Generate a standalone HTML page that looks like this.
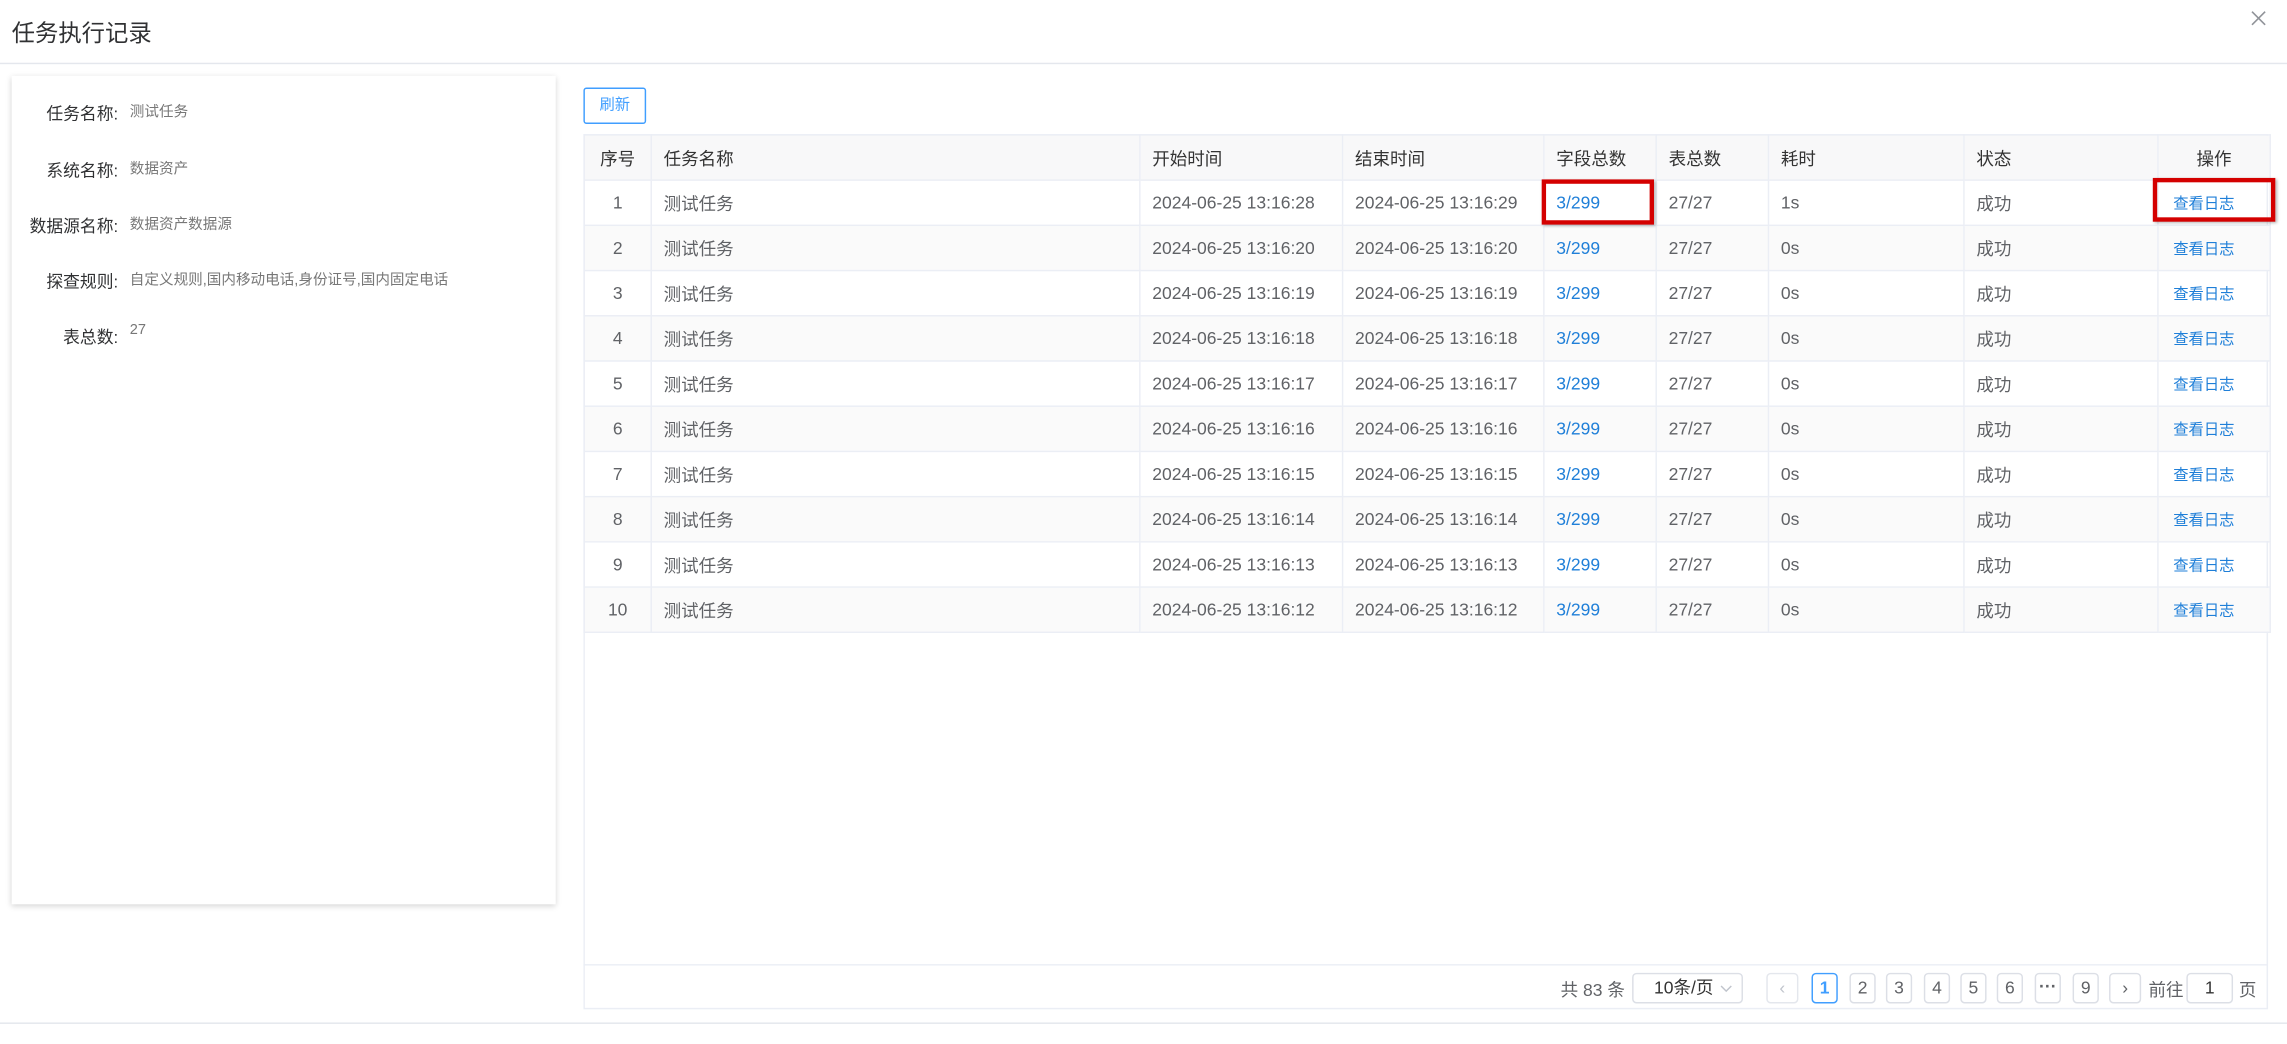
<!DOCTYPE html>
<html><head><meta charset="utf-8"><style>
html,body{margin:0;padding:0;background:#fff;overflow:hidden;width:2287px;height:1044px}
#w{position:absolute;left:0;top:0;width:1568px;height:716px;transform:scale(1.45855);transform-origin:0 0;font-family:"Liberation Sans","Noto Sans CJK SC",sans-serif;color:#606266}
.a{position:absolute;white-space:nowrap}
.title{left:8px;top:9px;font-size:16px;color:#303133}
.hl{position:absolute;left:0;width:1568px;height:1px;background:#e4e7ed}
.card{position:absolute;left:8px;top:52px;width:373px;height:568px;background:#fff;box-shadow:0 1px 4px rgba(0,0,0,.18)}
.lb{font-size:11.5px;color:#303133;text-align:right;width:75px;left:6px}
.vl{font-size:10px;color:#777;left:89px}
.btn{position:absolute;left:400px;top:60px;width:41px;height:23px;border:1px solid #409eff;border-radius:2px;color:#409eff;font-size:10.5px;text-align:center;line-height:23px}
.tb{position:absolute;left:400px;top:92px;width:1155px;height:600px;border:1px solid #ebeef5;box-sizing:border-box}
table{border-collapse:collapse;position:absolute;left:400px;top:92px;table-layout:fixed;font-size:12px}
td,th{height:30px;border:1px solid #ebeef5;padding:0 0 0 8px;text-align:left;font-weight:normal;white-space:nowrap;overflow:hidden}
th{background:#f8f8f9;color:#333}
tr.e td{background:#fafafa}
.c{text-align:center;padding:0}
.lk{color:#1f7fd8}
.op{color:#1f7fd8;font-size:10.5px;padding-left:10px}
.rb{position:absolute;border:3px solid #d40000;box-sizing:border-box;box-shadow:1px 1px 2px rgba(0,0,0,.3)}
.pg{position:absolute;top:667px;height:21px;border:1px solid #dcdfe6;border-radius:3px;box-sizing:border-box;font-size:12px;text-align:center;line-height:19px;color:#606266;background:#fff}
</style></head><body><div id="w">
<div class="a title">任务执行记录</div>
<svg class="a" style="left:1543px;top:7px" width="11" height="11" viewBox="0 0 11 11"><path d="M1 1L10 10M10 1L1 10" stroke="#909399" stroke-width="1.1"/></svg>
<div class="hl" style="top:43px"></div>
<div class="card"></div>
<div class="a lb" style="top:70px">任务名称:</div><div class="a vl" style="top:68px">测试任务</div>
<div class="a lb" style="top:109px">系统名称:</div><div class="a vl" style="top:107px">数据资产</div>
<div class="a lb" style="top:147px;left:0;width:81px">数据源名称:</div><div class="a vl" style="top:145px">数据资产数据源</div>
<div class="a lb" style="top:185px">探查规则:</div><div class="a vl" style="top:183px">自定义规则,国内移动电话,身份证号,国内固定电话</div>
<div class="a lb" style="top:223px">表总数:</div><div class="a vl" style="top:221px">27</div>
<div class="btn">刷新</div>
<div class="tb"></div>
<table>
<colgroup><col style="width:46px"><col style="width:335px"><col style="width:139px"><col style="width:138px"><col style="width:77px"><col style="width:77px"><col style="width:134px"><col style="width:133px"><col style="width:77px"></colgroup>
<tr><th class="c">序号</th><th>任务名称</th><th>开始时间</th><th>结束时间</th><th>字段总数</th><th>表总数</th><th>耗时</th><th>状态</th><th class="c">操作</th></tr>
<tr><td class="c">1</td><td>测试任务</td><td>2024-06-25 13:16:28</td><td>2024-06-25 13:16:29</td><td class="lk">3/299</td><td>27/27</td><td>1s</td><td>成功</td><td class="op">查看日志</td></tr>
<tr class="e"><td class="c">2</td><td>测试任务</td><td>2024-06-25 13:16:20</td><td>2024-06-25 13:16:20</td><td class="lk">3/299</td><td>27/27</td><td>0s</td><td>成功</td><td class="op">查看日志</td></tr>
<tr><td class="c">3</td><td>测试任务</td><td>2024-06-25 13:16:19</td><td>2024-06-25 13:16:19</td><td class="lk">3/299</td><td>27/27</td><td>0s</td><td>成功</td><td class="op">查看日志</td></tr>
<tr class="e"><td class="c">4</td><td>测试任务</td><td>2024-06-25 13:16:18</td><td>2024-06-25 13:16:18</td><td class="lk">3/299</td><td>27/27</td><td>0s</td><td>成功</td><td class="op">查看日志</td></tr>
<tr><td class="c">5</td><td>测试任务</td><td>2024-06-25 13:16:17</td><td>2024-06-25 13:16:17</td><td class="lk">3/299</td><td>27/27</td><td>0s</td><td>成功</td><td class="op">查看日志</td></tr>
<tr class="e"><td class="c">6</td><td>测试任务</td><td>2024-06-25 13:16:16</td><td>2024-06-25 13:16:16</td><td class="lk">3/299</td><td>27/27</td><td>0s</td><td>成功</td><td class="op">查看日志</td></tr>
<tr><td class="c">7</td><td>测试任务</td><td>2024-06-25 13:16:15</td><td>2024-06-25 13:16:15</td><td class="lk">3/299</td><td>27/27</td><td>0s</td><td>成功</td><td class="op">查看日志</td></tr>
<tr class="e"><td class="c">8</td><td>测试任务</td><td>2024-06-25 13:16:14</td><td>2024-06-25 13:16:14</td><td class="lk">3/299</td><td>27/27</td><td>0s</td><td>成功</td><td class="op">查看日志</td></tr>
<tr><td class="c">9</td><td>测试任务</td><td>2024-06-25 13:16:13</td><td>2024-06-25 13:16:13</td><td class="lk">3/299</td><td>27/27</td><td>0s</td><td>成功</td><td class="op">查看日志</td></tr>
<tr class="e"><td class="c">10</td><td>测试任务</td><td>2024-06-25 13:16:12</td><td>2024-06-25 13:16:12</td><td class="lk">3/299</td><td>27/27</td><td>0s</td><td>成功</td><td class="op">查看日志</td></tr>
</table>
<div class="rb" style="left:1057px;top:123px;width:77px;height:31px"></div>
<div class="rb" style="left:1476px;top:122px;width:84px;height:30px"></div>
<div class="hl" style="top:661px;left:400px;width:1155px;background:#ebeef5"></div>
<div class="a" style="left:1070px;top:670px;font-size:12px">共 83 条</div>
<div class="pg" style="left:1119px;width:76px;text-align:left;padding-left:14px;color:#333">10条/页<svg style="position:absolute;right:6px;top:7px" width="9" height="6" viewBox="0 0 9 6"><path d="M1 1L4.5 4.5L8 1" stroke="#c0c4cc" fill="none"/></svg></div>
<div class="pg" style="left:1211px;width:22px;color:#c0c4cc;border-color:#e4e7ed">‹</div>
<div class="pg" style="left:1242px;width:18px;border-color:#409eff;color:#409eff;font-weight:bold">1</div>
<div class="pg" style="left:1268px;width:18px">2</div>
<div class="pg" style="left:1293px;width:18px">3</div>
<div class="pg" style="left:1319px;width:18px">4</div>
<div class="pg" style="left:1344px;width:18px">5</div>
<div class="pg" style="left:1369px;width:18px">6</div>
<div class="pg" style="left:1395px;width:18px;font-weight:bold;line-height:16px">···</div>
<div class="pg" style="left:1421px;width:18px">9</div>
<div class="pg" style="left:1446px;width:22px">›</div>
<div class="a" style="left:1473px;top:670px;font-size:12px">前往</div>
<div class="pg" style="left:1499px;width:32px;color:#333">1</div>
<div class="a" style="left:1535px;top:670px;font-size:12px">页</div>
<div class="hl" style="top:701px"></div>
</div></body></html>
